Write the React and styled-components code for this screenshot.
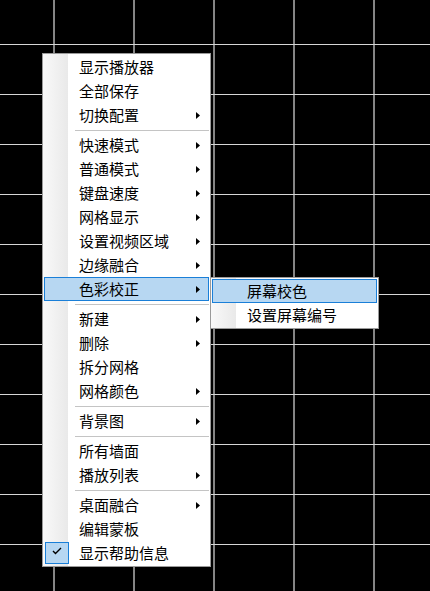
import React from "react";
import styled, { createGlobalStyle } from "styled-components";

const Global = createGlobalStyle`
  html, body { margin: 0; padding: 0; background: #000; }
  body { font-family: "Noto Sans CJK SC", "Noto Sans", sans-serif; }
`;

const Canvas = styled.div`
  position: relative;
  width: 430px;
  height: 591px;
  overflow: hidden;
  background-color: #000;
  background-image:
    linear-gradient(to bottom, #d6d6d6 1px, transparent 1px),
    linear-gradient(to right, #858585 2px, transparent 2px);
  background-size: 100% 50px, 80px 100%;
  background-position: 0 44px, 53px 0;
`;

const Menu = styled.div`
  position: absolute;
  left: ${(p) => p.$left}px;
  top: ${(p) => p.$top}px;
  width: 167px;
  padding: 1px 0;
  border: 1px solid #9a9a9a;
  background: linear-gradient(to right, #f9f9f9, #e9e9e9) 0 0 / 25px 100% no-repeat, #fff;
  display: flex;
  flex-direction: column;
`;

const SubMenu = styled(Menu)`
  left: calc(100% + 2px);
  top: -1px;
  z-index: 2;
`;

const Item = styled.div`
  position: relative;
  box-sizing: border-box;
  height: 24px;
  margin: 0 1px;
  display: flex;
  align-items: center;
  border: 1px solid ${(p) => (p.$active ? "#1a7fd8" : "transparent")};
  background: ${(p) => (p.$active ? "#b7d7f2" : "transparent")};
  font-size: 15px;
  color: #000;
  white-space: nowrap;
`;

const IconCell = styled.div`
  box-sizing: border-box;
  width: 24px;
  height: 22px;
  flex: none;
  display: flex;
  align-items: center;
  justify-content: center;
  border: 1px solid ${(p) => (p.$checked ? "#1a7fd8" : "transparent")};
  background: ${(p) => (p.$checked ? "#b7d7f2" : "transparent")};
`;

const Label = styled.span`
  flex: 1;
  padding-left: 10px;
  line-height: 22px;
`;

const Arrow = styled.svg`
  flex: none;
  width: 4px;
  height: 7px;
  margin-right: 8px;
`;

const Separator = styled.div`
  height: 6px;
  margin: 0 1px 0 32px;
  display: flex;
  align-items: center;
  &::before {
    content: "";
    flex: 1;
    height: 1px;
    background: #c4c4c4;
  }
`;

const items = [
  { label: "显示播放器" },
  { label: "全部保存" },
  { label: "切换配置", sub: true },
  "sep",
  { label: "快速模式", sub: true },
  { label: "普通模式", sub: true },
  { label: "键盘速度", sub: true },
  { label: "网格显示", sub: true },
  { label: "设置视频区域", sub: true },
  { label: "边缘融合", sub: true },
  { label: "色彩校正", sub: true, active: true },
  "sep",
  { label: "新建", sub: true },
  { label: "删除", sub: true },
  { label: "拆分网格" },
  { label: "网格颜色", sub: true },
  "sep",
  { label: "背景图", sub: true },
  "sep",
  { label: "所有墙面" },
  { label: "播放列表", sub: true },
  "sep",
  { label: "桌面融合", sub: true },
  { label: "编辑蒙板" },
  { label: "显示帮助信息", checked: true },
];

const subItems = [{ label: "屏幕校色", active: true }, { label: "设置屏幕编号" }];

const ArrowIcon = () => (
  <Arrow viewBox="0 0 4 7">
    <polygon points="0,0 4,3.5 0,7" fill="#000" />
  </Arrow>
);

const Check = () => (
  <svg width="10" height="8" viewBox="0 0 10 8" style={{ marginTop: -4 }}>
    <polyline points="1,4 3.5,6.5 9,1" fill="none" stroke="#000" strokeWidth="1.4" />
  </svg>
);

function MenuItem({ item, children }) {
  return (
    <Item $active={item.active}>
      <IconCell $checked={item.checked}>{item.checked && <Check />}</IconCell>
      <Label>{item.label}</Label>
      {item.sub && <ArrowIcon />}
      {children}
    </Item>
  );
}

export default function App() {
  return (
    <>
      <Global />
      <Canvas>
        <Menu $left={42} $top={53}>
          {items.map((it, i) =>
            it === "sep" ? (
              <Separator key={i} />
            ) : (
              <MenuItem key={i} item={it}>
                {it.active && (
                  <SubMenu as="div">
                    {subItems.map((s, j) => (
                      <MenuItem key={j} item={s} />
                    ))}
                  </SubMenu>
                )}
              </MenuItem>
            )
          )}
        </Menu>
      </Canvas>
    </>
  );
}
